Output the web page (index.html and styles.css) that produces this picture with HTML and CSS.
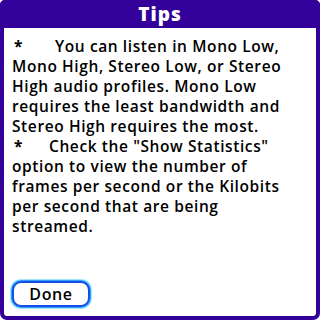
FILE: index.html
```html
<!DOCTYPE html>
<html>
<head>
<meta charset="utf-8">
<title>Tips</title>
<link rel="stylesheet" href="styles.css">
</head>
<body>
<div class="dialog">
 <div class="title">Tips</div>
 <div class="content">
  <p><span class="bullet">*</span>You can listen in Mono Low, Mono High, Stereo Low, or Stereo High audio profiles. Mono Low requires the least bandwidth and Stereo High requires the most.</p>
  <p><span class="bullet b2">*</span>Check the "Show Statistics" option to view the number of frames per second or the Kilobits per second that are being streamed.</p>
 </div>
 <div class="buttons">
  <button class="done">Done</button>
 </div>
</div>
</body>
</html>
```

FILE: styles.css
```css
body{
	margin: 0;
	background: #fff;
	font-family: "Open Sans", "DejaVu Sans", sans-serif;
}

.dialog{
	width: 320px;
	height: 320px;
	box-sizing: border-box;
	border: 4px solid #330099;
	border-top: 0;
	border-radius: 5px 5px 7px 7px;
	display: flex;
	flex-direction: column;
	background: #fff;
}

.title{
	background: #330099;
	color: #fff;
	height: 28px;
	margin: 0 -4px;
	border-radius: 5px 5px 0 0;
	text-align: center;
	font-weight: 800;
	font-size: 19px;
	letter-spacing: 1px;
	line-height: 28px;
}

.content{
	flex: 1;
	padding: 8px 15px 0 8px;
	font-size: 15.5px;
	font-weight: 600;
	letter-spacing: 0.6px;
	line-height: 20px;
	color: #000;
}

.content p{
	margin: 0;
}

.bullet{
	display: inline-block;
	width: 43px;
	padding-left: 2px;
	box-sizing: border-box;
	font-weight: bold;
}
.bullet.b2{
	width: 37px;
}

.buttons{
	padding: 0 0 9px 8px;
}

.done{
	width: 78px;
	height: 26px;
	border: 2px solid #1450e6;
	border-radius: 9px;
	background: #fff;
	box-shadow: 0 0 0 1px #3aa0ff, 0 0 0 2px #9ee8ff;
	font-family: "Open Sans", "DejaVu Sans", sans-serif;
	font-weight: 600;
	font-size: 16px;
	letter-spacing: 0.6px;
	color: #000;
	padding: 0;
}
```
